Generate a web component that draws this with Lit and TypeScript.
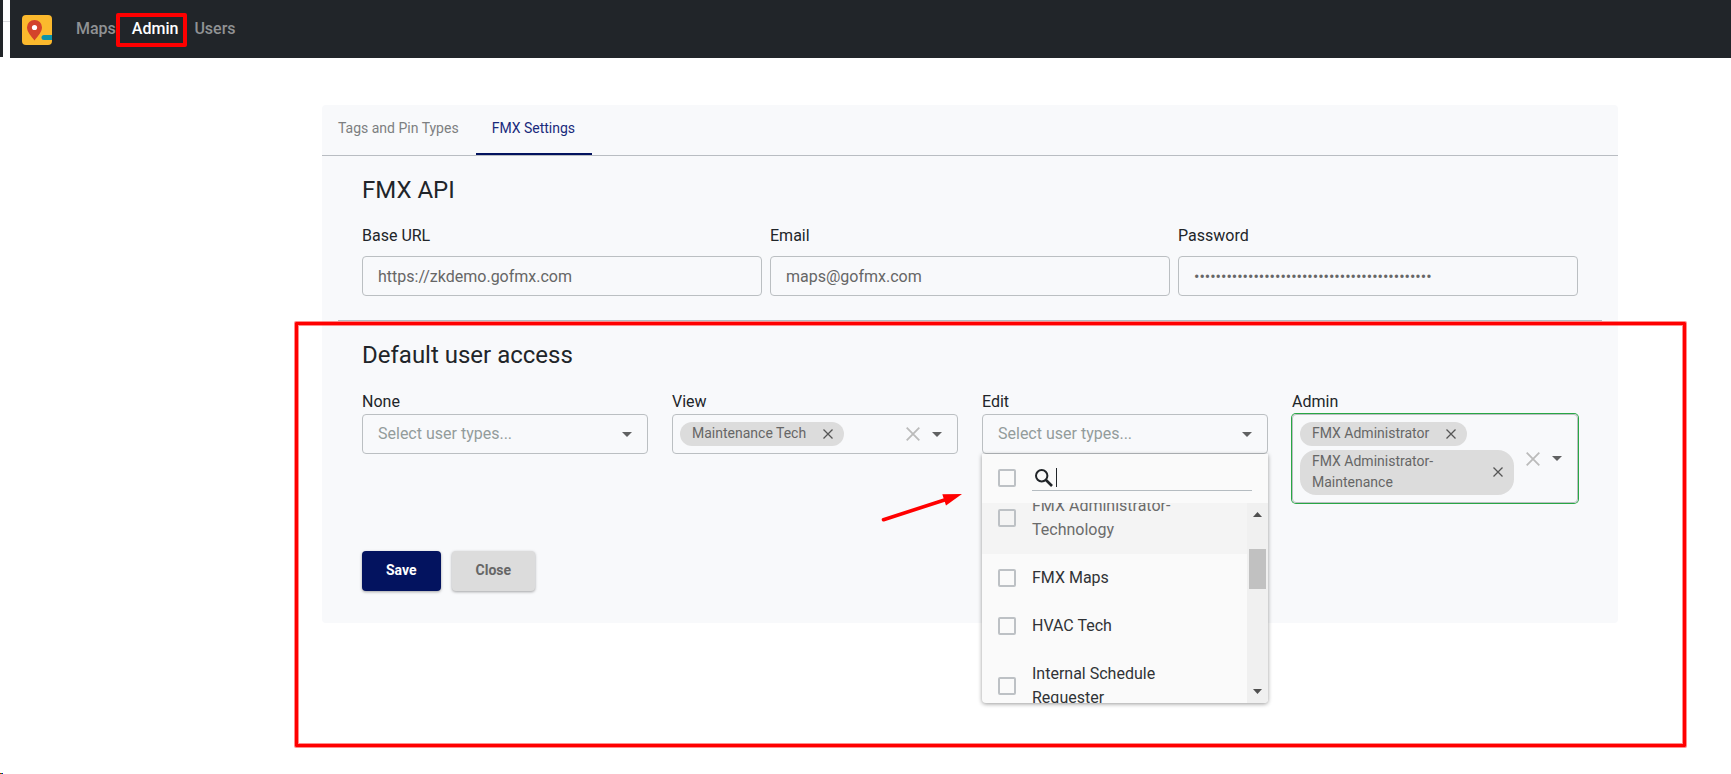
import { LitElement, html, css } from "lit";
import { customElement, property } from "lit/decorators.js";

const cross = (size: number) => html`<svg width=${size} height=${size} viewBox="0 0 10 10" aria-hidden="true">
  <path d="M.5.5 9.5 9.5M9.5.5.5 9.5" fill="none" stroke="currentColor" stroke-width="1.3"></path>
</svg>`;

const caret = html`<svg class="caret" width="10" height="5" viewBox="0 0 10 5" aria-hidden="true">
  <path d="M0 0H10L5 5Z" fill="currentColor"></path>
</svg>`;

@customElement("user-type-select")
class UserTypeSelect extends LitElement {
  @property() label = "";
  @property({ type: Array }) chips: string[] = [];
  @property({ type: Boolean }) valid = false;

  static styles = css`
    :host { display: block; position: relative; min-width: 0; color: #212529; }
    * { box-sizing: border-box; }
    label, .label { display: block; font-size: 16px; line-height: 24px; }
    button { font: inherit; border: 0; background: none; padding: 0; color: inherit; display: flex; align-items: center; justify-content: center; cursor: pointer; }
    .single { display: grid; align-items: center; }
    .single > * { grid-area: 1 / 1; }
    select { appearance: none; width: 100%; height: 40px; padding: 0 36px 2px 15px; border: 1px solid #bbbfc2; border-radius: 4px; background: transparent; color: #939c9b; font-family: inherit; font-size: 16px; margin: 0; }
    .single .caret { justify-self: end; margin-right: 16px; color: #606162; pointer-events: none; }
    .box { display: flex; align-items: center; min-height: 40px; padding: 7px 15px 7px 7px; border: 1px solid #bbbfc2; border-radius: 4px; }
    .valid { box-shadow: 0 0 0 1px #28a745; }
    .chips { flex: 1; display: flex; flex-wrap: wrap; gap: 4px; min-width: 0; padding-right: 12px; }
    .chip { display: flex; align-items: center; gap: 16px; padding: 1px 10px 2px 12px; border-radius: 16px; background: #dcdcdc; color: #666; font-size: 14px; line-height: 21px; max-width: 214px; }
    .chip span { flex: 1; }
    .chip button { width: 12px; color: #555; }
    .clear { width: 14px; color: #bbb; margin-right: 12px; }
    .open { color: #606162; }
  `;

  render() {
    if (!this.chips.length) {
      return html`<label for="field">${this.label}</label>
        <div class="single">
          <select id="field"><option>Select user types...</option></select>
          ${caret}
        </div>
        <slot></slot>`;
    }
    return html`<span class="label" id="name">${this.label}</span>
      <div class="box ${this.valid ? "valid" : ""}" role="group" aria-labelledby="name">
        <div class="chips">
          ${this.chips.map((c) => html`<div class="chip"><span>${c}</span><button aria-label="Remove">${cross(10)}</button></div>`)}
        </div>
        <button class="clear" aria-label="Clear">${cross(14)}</button>
        <button class="open" aria-label="Open">${caret}</button>
      </div>`;
  }
}

@customElement("user-type-menu")
class UserTypeMenu extends LitElement {
  private items = ["FMX Administrator-Technology", "FMX Maps", "HVAC Tech", "Internal Schedule Requester"];

  static styles = css`
    :host { display: block; position: absolute; top: 100%; left: 0; right: 0; z-index: 2; background: #fafafa; border-radius: 0 0 4px 4px; box-shadow: 0 1px 4px rgba(0, 0, 0, 0.4); overflow: hidden; }
    * { box-sizing: border-box; }
    .search { display: flex; align-items: center; gap: 16px; height: 49px; padding: 0 16px 1px; }
    input[type="checkbox"] { appearance: none; flex: none; width: 18px; height: 18px; margin: 0; border: 2px solid #bdc1c5; border-radius: 2px; background: transparent; }
    .field { flex: 1; display: flex; align-items: center; height: 26px; border-bottom: 1px solid #b5bcc1; color: #212529; min-width: 0; }
    .caret { width: 1px; height: 19px; background: #212529; margin-left: 2px; }
    .field svg { margin-left: 2px; }
    .field input { flex: 1; min-width: 0; height: 22px; border: 0; padding: 0; background: none; outline: 0; font-family: inherit; font-size: 16px; }
    .view { display: flex; height: 200px; }
    .list { flex: 1; overflow: hidden; }
    .item { display: flex; align-items: center; gap: 16px; padding: 12px 48px 12px 16px; font-size: 16px; line-height: 24px; color: #303336; }
    .current { background: #f4f4f4; color: #6b6b6b; }
    .bar { width: 21px; background: #f0f0f0; display: flex; flex-direction: column; align-items: center; padding: 9px 0; color: #505050; }
    .thumb { width: 17px; height: 40px; background: #c1c1c1; margin: 32px 0 auto; }
  `;

  firstUpdated() {
    this.renderRoot.querySelector(".list")!.scrollTop = 21;
  }

  render() {
    return html`<div class="search">
        <input type="checkbox" aria-label="Select all" />
        <div class="field">
          <svg width="20" height="20" viewBox="0 0 20 20" aria-hidden="true">
            <circle cx="7.7" cy="7.7" r="5.7" fill="none" stroke="currentColor" stroke-width="2"></circle>
            <path d="M12 12 18 18" stroke="currentColor" stroke-width="2.6"></path>
          </svg>
          <span class="caret"></span>
          <input type="text" aria-label="Search" />
        </div>
      </div>
      <div class="view">
        <div class="list">
          ${this.items.map((t, i) => html`<label class="item ${i === 0 ? "current" : ""}"><input type="checkbox" /><span>${t}</span></label>`)}
        </div>
        <div class="bar">
          <svg width="9" height="5" viewBox="0 0 9 5"><path d="M0 5H9L4.5 0Z" fill="currentColor"></path></svg>
          <div class="thumb"></div>
          <svg width="9" height="5" viewBox="0 0 9 5"><path d="M0 0H9L4.5 5Z" fill="currentColor"></path></svg>
        </div>
      </div>`;
  }
}

@customElement("app-root")
class AppRoot extends LitElement {
  static styles = css`
    :host { display: block; position: relative; min-height: 100vh; overflow: hidden; background: #fff; font-family: Roboto, "Liberation Sans", sans-serif; color: #212529; }
    * { box-sizing: border-box; }
    .top { display: flex; align-items: flex-start; }
    .edge { width: 3px; height: 57px; background: #212529; }
    .seam { width: 7px; height: 1px; margin-top: 21px; background: #dcdde0; }
    nav { flex: 1; display: flex; align-items: center; height: 58px; padding: 0 12px; background: #212529; }
    .logo { display: block; margin: 2px 16px 0 0; }
    nav a { padding: 0 8px; font-size: 16px; line-height: 24px; font-weight: 500; color: #909294; text-decoration: none; }
    nav a.on { color: #fff; }
    main { padding: 47px 113px 0 322px; }
    .card { background: #f8f9fb; border-radius: 4px; }
    .tabs { display: flex; border-bottom: 1px solid #b9bdc2; }
    .tabs button { height: 50px; padding: 0 17px 4px 16px; border: 0; background: none; font-family: inherit; font-size: 14px; line-height: 21px; color: #7d7f81; }
    .tabs button.on { color: #182a7b; padding-bottom: 2px; border-bottom: 2px solid #03135f; }
    .section { padding: 18px 40px 0; }
    h2 { margin: 0 0 18px; font-size: 24px; line-height: 32px; font-weight: 400; }
    .creds { display: grid; grid-template-columns: repeat(3, 1fr); gap: 8px; }
    .creds label { display: block; margin-bottom: 8px; font-size: 16px; line-height: 24px; }
    .creds input { display: block; width: 100%; height: 40px; padding: 0 15px; border: 1px solid #bbbfc2; border-radius: 4px; background: transparent; font-family: inherit; font-size: 16px; color: #666; }
    hr { height: 1px; margin: 24px 16px 0; border: 0; background: #b5babf; }
    .access { display: grid; grid-template-columns: repeat(4, 1fr); gap: 24px; align-items: start; padding-top: 1px; }
    .actions { display: flex; gap: 11px; padding: 48px 40px 32px; }
    .actions button { height: 40px; padding: 0 24px 2px; border: 0; border-radius: 4px; font-family: inherit; font-size: 14px; font-weight: 700; background: #dcdcdc; color: #666; box-shadow: 0 1px 3px rgba(0, 0, 0, 0.35); }
    .actions .save { background: #03135f; color: #fff; }
    .mark { position: absolute; pointer-events: none; z-index: 3; }
    .mark-nav { left: 116px; top: 13px; width: 71px; height: 34px; border: 4px solid #f00; border-radius: 2px; }
    .mark-area { left: 295px; right: 45px; top: 322px; height: 425px; border: 3px solid #f00; border-radius: 1px; box-shadow: 0 0 0 1px rgba(255, 0, 0, 0.45), inset 0 0 0 1px rgba(255, 0, 0, 0.45); }
    .mark-arrow { left: 880px; top: 490px; }
    .speck { position: absolute; left: 0; bottom: 0; width: 3px; height: 1px; background: linear-gradient(90deg, #c00 33%, #0a0 33% 66%, #00c 66%); }
  `;

  render() {
    return html`
      <header class="top">
        <div class="edge"></div>
        <div class="seam"></div>
        <nav>
          <svg class="logo" width="30" height="30" viewBox="0 0 30 30" role="img" aria-label="Maps logo">
            <rect width="30" height="30" rx="4" fill="#fbb92d"></rect>
            <path d="M12.5 5a7.3 7.3 0 0 0-7.5 7.3C5 17 9 21 12.5 25.5C16 21 20 17 20 12.3A7.3 7.3 0 0 0 12.5 5Z" fill="#d3432b"></path>
            <circle cx="12.5" cy="12.5" r="2.6" fill="#fff"></circle>
            <path d="M30 20H22a2.500 2.500 0 0 0 0 5h8Z" fill="#0c93a8"></path>
          </svg>
          <a href="#maps">Maps</a><a href="#admin" class="on">Admin</a><a href="#users">Users</a>
        </nav>
      </header>
      <main>
        <div class="card">
          <div class="tabs" role="tablist">
            <button role="tab">Tags and Pin Types</button>
            <button role="tab" class="on" aria-selected="true">FMX Settings</button>
          </div>
          <section class="section">
            <h2>FMX API</h2>
            <div class="creds">
              <div><label for="url">Base URL</label><input id="url" type="text" .value=${"https://zkdemo.gofmx.com"} /></div>
              <div><label for="email">Email</label><input id="email" type="email" .value=${"maps@gofmx.com"} /></div>
              <div><label for="pass">Password</label><input id="pass" type="password" .value=${"x".repeat(44)} /></div>
            </div>
          </section>
          <hr />
          <section class="section">
            <h2>Default user access</h2>
            <div class="access">
              <user-type-select label="None"></user-type-select>
              <user-type-select label="View" .chips=${["Maintenance Tech"]}></user-type-select>
              <user-type-select label="Edit"><user-type-menu></user-type-menu></user-type-select>
              <user-type-select label="Admin" valid .chips=${["FMX Administrator", "FMX Administrator-Maintenance"]}></user-type-select>
            </div>
          </section>
          <div class="actions">
            <button class="save">Save</button>
            <button>Close</button>
          </div>
        </div>
      </main>
      <div class="mark mark-nav"></div>
      <div class="mark mark-area"></div>
      <svg class="mark mark-arrow" width="84" height="34" viewBox="0 0 84 34" aria-hidden="true">
        <path d="M3.5 29.7 66 9.5" stroke="#f00" stroke-width="3.6" stroke-linecap="round"></path>
        <path d="M82 4 62.3 4.3 66 15.5Z" fill="#f00"></path>
      </svg>
      <div class="speck"></div>
    `;
  }
}
